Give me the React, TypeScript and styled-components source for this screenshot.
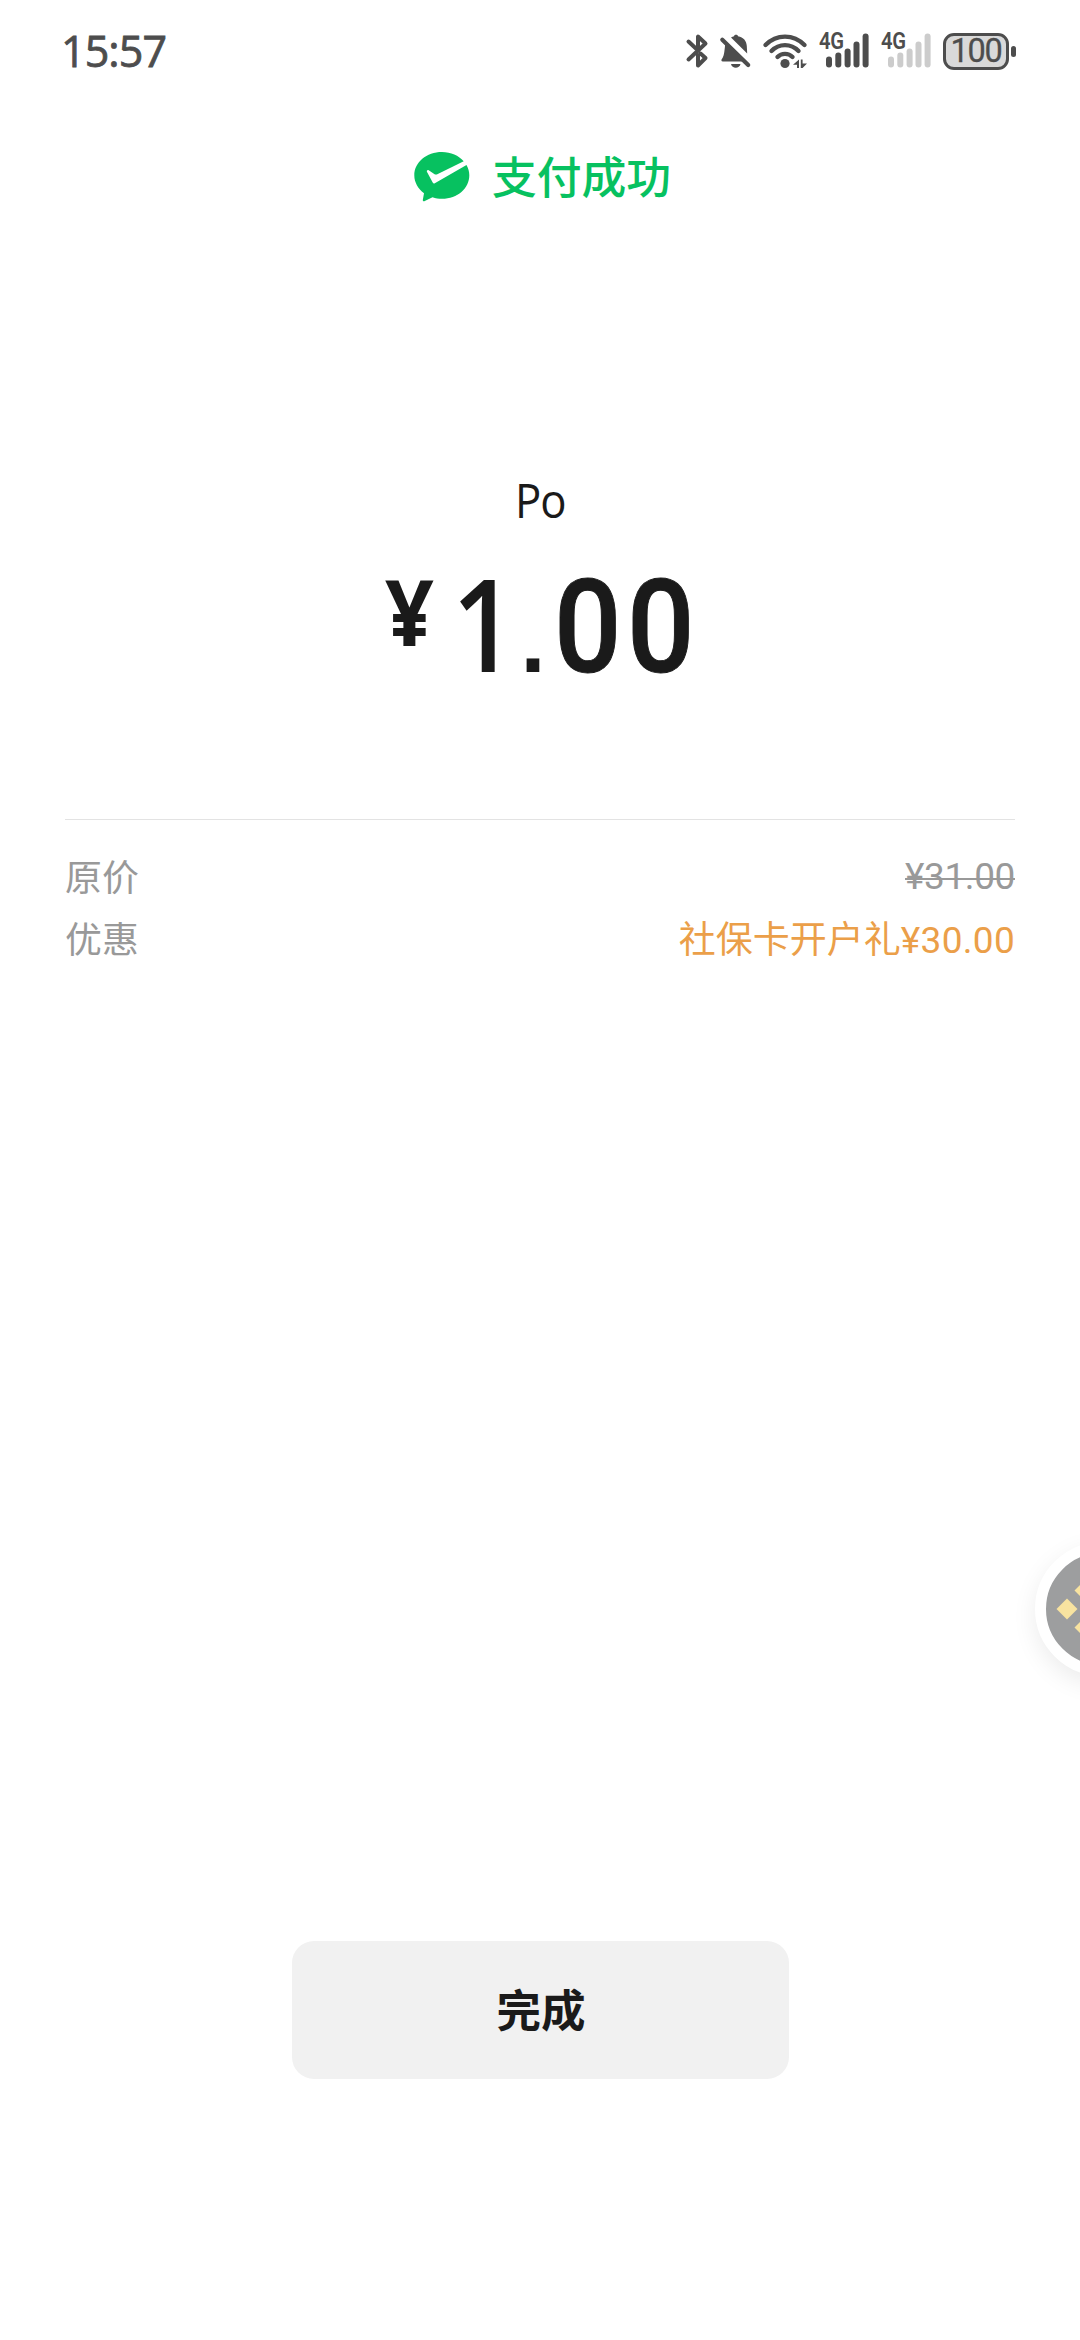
import React from "react";
import styled, { createGlobalStyle } from "styled-components";

const INK = "#1a1a1a";
const STATUS = "#4d4d4d";
const LATIN = `"Open Sans", "Noto Sans", "Noto Sans CJK SC", sans-serif`;
const NUMERIC = `Roboto, "Noto Sans CJK SC", sans-serif`;
const CJK = `"Noto Sans CJK SC", sans-serif`;

const Global = createGlobalStyle`
  html, body { margin: 0; padding: 0; background: #fff; }
  * { box-sizing: border-box; }
`;

const Screen = styled.main`
  position: relative;
  display: flex;
  flex-direction: column;
  width: 1080px;
  height: 2340px;
  overflow: hidden;
  background: #fff;
  color: ${INK};
  font-family: ${LATIN};
`;

const StatusBar = styled.header`
  display: flex;
  align-items: center;
  justify-content: space-between;
  height: 102px;
  padding: 0 64px 0 61px;
  color: ${STATUS};
`;

const Clock = styled.time`
  font-size: 43px;
  line-height: 60px;
  letter-spacing: -0.9px;
  -webkit-text-stroke: 0.8px ${STATUS};
`;

const StatusIcons = styled.div`
  display: flex;
  align-items: center;
  height: 40px;

  svg { display: block; overflow: visible; }
`;

const Glyph = styled.svg<{ $gap: number }>`
  margin-right: ${(p) => p.$gap}px;
  flex: none;
`;

const SignalBox = styled.div<{ $gap: number }>`
  display: grid;
  width: 50px;
  height: 36px;
  margin-right: ${(p) => p.$gap}px;

  > * { grid-area: 1 / 1; }
`;

const Network = styled.span`
  font: 600 23px/18px Roboto, sans-serif;
  letter-spacing: -0.4px;
  transform: scaleX(0.88);
  transform-origin: left;
  height: 18px;
`;

const Battery = styled.div`
  display: flex;
  align-items: center;
  gap: 2px;

  &::after {
    content: "";
    width: 5px;
    height: 11px;
    border-radius: 2.5px;
    background: ${STATUS};
  }
`;

const BatteryCell = styled.div`
  display: flex;
  align-items: center;
  justify-content: center;
  width: 66px;
  height: 37px;
  border: 3px solid ${STATUS};
  border-radius: 11px;
  background: #d9d9d9;
  font: 400 32.5px/31px ${NUMERIC};
  letter-spacing: -1.2px;
  -webkit-text-stroke: 0.3px ${STATUS};
`;

const Result = styled.div`
  display: flex;
  align-items: center;
  justify-content: center;
  gap: 22px;
  height: 150px;
  padding: 0 0 0 5px;
`;

const ResultText = styled.h1`
  margin: 0 0 4px;
  font: 500 44.8px/66px ${CJK};
  color: #07c160;
`;

const Payee = styled.div`
  align-self: center;
  margin-top: 216px;
  height: 64px;
  font-size: 47px;
  line-height: 64px;
  letter-spacing: -1px;
  transform: scaleX(0.93);
`;

const Amount = styled.div`
  display: flex;
  justify-content: center;
  height: 176px;
  margin-top: 2px;
  padding-left: 2px;
`;

const Currency = styled.span`
  width: 52px;
  height: 124px;
  margin: 15px 5px 0 0;
  font-size: 91px;
  font-weight: 700;
  line-height: 124px;
  transform: scaleX(0.94);
  transform-origin: left;
`;

const Digits = styled.span`
  display: flex;
  align-items: baseline;
  font-size: 129px;
  line-height: 176px;
  font-weight: 600;
`;

const One = styled.span`
  width: 73px;
  text-align: center;
  transform: translateX(5px) scaleX(0.87);
`;

const Zero = styled.span`
  width: 73px;
  text-align: center;
  font-family: Roboto, sans-serif;
  font-weight: 500;
  transform: scaleX(0.92);
  -webkit-text-stroke: 1px ${INK};
`;

const Point = styled.span`
  width: 36px;
  text-align: center;
  font-family: "Liberation Sans", sans-serif;
  font-size: 90px;
  font-weight: 700;
`;

const Details = styled.dl`
  display: flex;
  flex-direction: column;
  margin: 109px 65px 0;
  padding-top: 26px;
  border-top: 1px solid #e3e3e3;
`;

const DetailRow = styled.div`
  display: flex;
  justify-content: space-between;
  height: 62px;
  line-height: 62px;
  color: #999;
`;

const Label = styled.dt`
  font: 400 36.9px/58px ${CJK};
`;

const Value = styled.dd<{ $promo?: boolean }>`
  display: flex;
  margin: 0;
  font-family: ${NUMERIC};
  font-size: 37px;
  letter-spacing: ${(p) => (p.$promo ? "0.3px" : "-0.4px")};
  color: ${(p) => (p.$promo ? "#eb9f49" : "#999")};
`;

const Struck = styled.del`
  text-decoration: none;
  height: 62px;
  background: linear-gradient(#999, #999) 0 32px / 100% 2px no-repeat;
`;

const PromoName = styled.span`
  font: 400 37px/58px ${CJK};
  letter-spacing: 0;
`;

const PromoSum = styled.span`
  line-height: 66px;
`;

const DoneButton = styled.button`
  align-self: center;
  margin-top: 971px;
  width: 497px;
  height: 138px;
  padding: 0 0 4px 2px;
  border: 0;
  border-radius: 22px;
  background: #f1f1f1;
  color: ${INK};
  font: 700 44.5px/66px ${CJK};
`;

const FloatingBall = styled.aside`
  position: absolute;
  left: 1034.5px;
  top: 1542px;
  width: 134px;
  height: 134px;
  border-radius: 50%;
  border: 11px solid #fff;
  background: #9d9e9f;
  box-shadow: 0 8px 24px rgba(0, 0, 0, 0.08);

  svg { display: block; }
`;

const bars = [
  { x: 10, h: 11 },
  { x: 19.3, h: 15 },
  { x: 28.6, h: 19 },
  { x: 37.5, h: 26 },
  { x: 46.6, h: 34 },
];

const Signal = ({ gap, color }: { gap: number; color: string }) => (
  <SignalBox $gap={gap}>
    <svg width="50" height="36" viewBox="0 0 50 36">
      {bars.map((b) => (
        <rect key={b.x} x={b.x - 3} y={34.5 - b.h} width="6" height={b.h} rx="3" fill={color} />
      ))}
    </svg>
    <Network>4G</Network>
  </SignalBox>
);

const App = () => (
  <Screen>
    <Global />
    <StatusBar>
      <Clock>15:57</Clock>
      <StatusIcons>
        <Glyph $gap={12} width="22" height="36" viewBox="0 0 22 36" fill="none" stroke={STATUS} strokeWidth="4" strokeLinejoin="round" strokeLinecap="round">
          <path d="M2.5 8.5 L11 16.5 M2.5 26.5 L19.5 10.5 L12 3.5 V17.5 M12 22 V32.5 L19.5 25 L14.5 20.5" />
        </Glyph>
        <Glyph $gap={12} width="31" height="36" viewBox="0 0 31 36" fill={STATUS}>
          <path d="M11 4.5 C12 3.8 13 3.4 14 3.2 C14 1.2 18 1.2 18 3.2 C23.5 4 26.5 8 26.8 13 L27.2 20.5 Z" />
          <path d="M5.3 10.5 L22.5 28.5 H3 C1 28.5 1 26.7 2.2 25.5 C4.4 22.5 4.6 16 5.3 10.5 Z" />
          <path d="M11 31 H20.5 C19.5 36 12 36 11 31 Z" />
          <path d="M2.3 6.8 L28.2 32" stroke={STATUS} strokeWidth="4.2" strokeLinecap="round" />
        </Glyph>
        <Glyph $gap={12} width="44" height="36" viewBox="0 0 44 36" fill="none" stroke={STATUS} strokeWidth="4.4" strokeLinecap="round">
          <path d="M2.5 12 C13.5 0.8 30.5 0.8 41.5 12" />
          <path d="M8.5 18 C16 10.2 28 10.2 35.5 18" />
          <path d="M14.5 24 C18.5 19.8 25.5 19.8 29.5 24" />
          <circle cx="22" cy="30.5" r="4.6" fill={STATUS} stroke="none" />
          <path d="M36 26.5 V35 H34 V31.8 H30 Z M37.8 26.5 V35 H39.6 L44 30.5 H39.6 V26.5 Z" fill={STATUS} stroke="none" />
        </Glyph>
        <Signal gap={12} color={STATUS} />
        <Signal gap={12} color="#cccccc" />
        <Battery>
          <BatteryCell>100</BatteryCell>
        </Battery>
      </StatusIcons>
    </StatusBar>

    <Result>
      <svg width="56" height="50" viewBox="0 0 56 50">
        <path
          d="M28 0 C12.5 0 0.3 10.3 0.3 23.3 C0.3 30.4 4 36.8 10 41.2 L8.8 48 C8.7 49.3 9.8 49.7 10.8 49.1 L18.5 45.3 C21.5 46.3 24.7 46.8 28 46.8 C43.5 46.8 55.3 36.3 55.3 23.3 C55.3 19.5 54.3 16 52.5 12.9 L20.8 31.2 C19.9 31.7 19.1 31.3 18.7 30.5 L12.9 19.7 C12.5 18.5 13.7 17.6 14.7 18.3 L20.6 22.3 C21.3 22.7 22 22.7 22.8 22.4 L49.7 9.3 C44.8 3.6 36.9 0 28 0 Z"
          fill="#07c160"
        />
      </svg>
      <ResultText>支付成功</ResultText>
    </Result>

    <Payee>Po</Payee>
    <Amount>
      <Currency>¥</Currency>
      <Digits>
        <One>1</One>
        <Point>.</Point>
        <Zero>0</Zero>
        <Zero>0</Zero>
      </Digits>
    </Amount>

    <Details>
      <DetailRow>
        <Label>原价</Label>
        <Value>
          <Struck>¥31.00</Struck>
        </Value>
      </DetailRow>
      <DetailRow>
        <Label>优惠</Label>
        <Value $promo>
          <PromoName>社保卡开户礼</PromoName>
          <PromoSum>¥30.00</PromoSum>
        </Value>
      </DetailRow>
    </Details>

    <DoneButton>完成</DoneButton>

    <FloatingBall>
      <svg width="112" height="112" viewBox="0 0 112 112" fill="#f8e3a0">
        <path d="M21 45.5 L31.5 56 L21 66.5 L10.5 56 Z" />
        <path d="M39 27 L49.5 37.5 L39 48 L28.5 37.5 Z" />
        <path d="M39 64 L49.5 74.5 L39 85 L28.5 74.5 Z" />
      </svg>
    </FloatingBall>
  </Screen>
);

export default App;
